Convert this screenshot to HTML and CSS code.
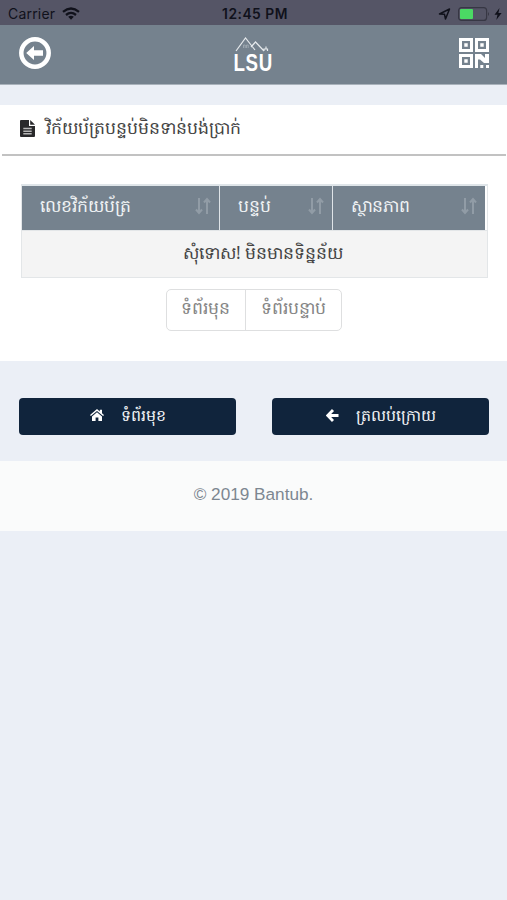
FILE: index.html
```html
<!DOCTYPE html>
<html lang="km">
<head>
<meta charset="utf-8">
<title>Bantub</title>
<link rel="stylesheet" href="styles.css">
</head>
<body>
<div class="status">
  <div class="carrier">Carrier
    <svg width="18" height="13" viewBox="0 0 18 13"><g fill="none" stroke="#10111b" stroke-width="2.3"><path d="M1 4.8Q9-1.8 17 4.8"/><path d="M4 8Q9 3.8 14 8"/></g><path d="M6.2 9.8Q9 7.6 11.8 9.8L9 12.7Z" fill="#10111b"/></svg>
  </div>
  <div class="time">12:45 PM</div>
  <div class="power">
    <svg width="13" height="12" viewBox="0 0 13 12"><path d="M1.5 6 11.5 1 7.5 11 6.5 6.3Z" fill="none" stroke="#10111b" stroke-width="1.5" stroke-linejoin="round"/></svg>
    <svg width="32" height="14" viewBox="0 0 32 14"><rect x=".6" y=".6" width="28" height="12.8" rx="3" fill="none" stroke="#373744" stroke-width="1.2"/><rect x="2" y="2" width="13" height="10" rx="1" fill="#4bd964"/><path d="M30 5Q32 7 30 9Z" fill="#373744"/></svg>
    <svg width="8" height="12" viewBox="0 0 8 12"><path d="M5.5 0 .5 6.8H3.5L2.3 12 7.6 4.9H4.4Z" fill="#10111b"/></svg>
  </div>
</div>
<header class="navbar">
  <svg width="32" height="32" viewBox="0 0 32 32"><circle cx="16" cy="16" r="13.7" fill="none" stroke="#fff" stroke-width="4.5"/><path d="M7.2 16 15 9V13.3H24V18.7H15V23Z" fill="#fff"/></svg>
  <svg class="logo" width="42" height="46" viewBox="0 0 42 46"><g fill="none" stroke="#e5e9ec" stroke-width="1.2"><path d="M3 21 12.5 8 22 20M18 17 22.5 12 31 21M31 21V19H34.5V21M33 19V16.5"/><path d="M10.5 18V15H12.2V18M13.5 18V15H15.2V18" stroke="#a5aeb6" stroke-width=".8"/></g><text class="logo-text" x="0.5 16 33" y="41" transform="scale(.78 1)">LSU</text></svg>
  <svg width="30" height="30" viewBox="0 0 30 30"><g fill="none" stroke="#fff" stroke-width="3"><path d="M1.5 1.5H12.5V12.5H1.5ZM17.5 1.5H28.5V12.5H17.5ZM1.5 17.5H12.5V28.5H1.5Z"/></g><g fill="#fff"><path d="M5.3 5.3h3.4v3.4H5.3ZM21.3 5.3h3.4v3.4h-3.4ZM5.3 21.3h3.4v3.4H5.3ZM16 16h6l4 4V16h4v9h-5l-4-3.5h-2V30h-3ZM21.3 27h3v3h-3ZM27 27h3v3h-3Z"/></g></svg>
</header>
<main class="panel">
  <h1 class="title">
    <svg width="15" height="17" viewBox="0 0 15 17"><path d="M0 1Q0 0 1 0H9V6H15V16Q15 17 14 17H1Q0 17 0 16Z" fill="#29292b"/><path d="M10.2 0 15 4.8H10.2Z" fill="#29292b"/><path d="M3.3 8.6H11.7M3.3 11.2H11.7M3.3 13.8H11.7" stroke="#b5b5b5" stroke-width="1.5"/></svg>
    <span>វិក័យប័ត្របន្ទប់មិនទាន់បង់ប្រាក់</span>
  </h1>
  <div class="table">
    <div class="thead">
      <div class="th"><span>លេខវិក័យប័ត្រ</span><svg width="16" height="18" viewBox="0 0 16 18"><path d="M4 1V15M1 12.5 4 16 7 12.5M12 17V3M9 5.5 12 2 15 5.5"/></svg></div>
      <div class="th"><span>បន្ទប់</span><svg width="16" height="18" viewBox="0 0 16 18"><path d="M4 1V15M1 12.5 4 16 7 12.5M12 17V3M9 5.5 12 2 15 5.5"/></svg></div>
      <div class="th"><span>ស្ថានភាព</span><svg width="16" height="18" viewBox="0 0 16 18"><path d="M4 1V15M1 12.5 4 16 7 12.5M12 17V3M9 5.5 12 2 15 5.5"/></svg></div>
    </div>
    <div class="empty">សុំទោស! មិនមានទិន្នន័យ</div>
  </div>
  <nav class="pager"><a>ទំព័រមុន</a><a>ទំព័របន្ទាប់</a></nav>
</main>
<div class="actions">
  <a class="btn"><svg width="14" height="12" viewBox="0 0 14 12"><path d="M7 0 9.8 2.4V.8H12V4.3L14 6 13.1 7 7 1.9.9 7 0 6Z"/><path d="M7 3.2 12 7.4V12H8.4V8.5H5.6V12H2V7.4Z"/></svg><span>ទំព័រមុខ</span></a>
  <a class="btn"><svg width="13" height="13" viewBox="0 0 13 13"><path d="M7 1 1.8 6.5 7 12M2 6.5H12.5" fill="none" stroke="#fff" stroke-width="2.8"/></svg><span>ត្រលប់ក្រោយ</span></a>
</div>
<footer class="footer">© 2019 Bantub.</footer>
</body>
</html>
```
FILE: styles.css
```css
* { box-sizing: border-box; }
body {
  margin: 0;
  min-height: 900px;
  background: #ebeff6;
  font: 17.3px/24px "Noto Sans", sans-serif;
  color: #444;
}
svg { display: block; flex: none; }
.status {
  display: grid;
  grid-template-columns: 1fr auto 1fr;
  align-items: center;
  height: 25px;
  padding: 2px 5px 0 8px;
  background: #555566;
  color: #10111b;
  font: 14px/20px Inter, sans-serif;
}
.carrier { display: flex; align-items: center; gap: 7px; letter-spacing: .2px; }
.time { font-weight: 600; letter-spacing: .5px; font-size: 13.8px; }
.power { display: flex; align-items: center; justify-content: flex-end; gap: 4px; }
.power svg:first-child { margin-right: 3px; }
.navbar {
  display: flex;
  justify-content: space-between;
  align-items: center;
  height: 60px;
  padding: 0 18px 4px 19px;
  background: #75828e;
  border-bottom: 1px solid #a9b2bb;
}
.logo { margin-right: 3px; }
.logo-text { font: 700 24px "Liberation Sans", sans-serif; fill: #fff; }
.panel { height: 256px; margin-top: 20px; padding-top: 0; background: #fff; }
.title {
  display: flex;
  align-items: center;
  gap: 11px;
  height: 51px;
  margin: 0 1px 0 2px;
  padding: 0 0 3px 18px;
  border-bottom: 2px solid #c2c2c2;
  font-size: inherit;
  font-weight: 400;
}
.table {
  margin: 28px 19px 0 21px;
  border: 1px solid #e3e6e8;
  border-top: 2px solid #dfe5e9;
}
.thead { display: grid; grid-template-columns: 197px 113px 1fr; height: 44px; padding-right: 2px; }
.th {
  display: flex;
  align-items: center;
  justify-content: space-between;
  padding: 0 8px 4px 18px;
  background: #75828e;
  color: #f0f3f5;
}
.th + .th { border-left: 1px solid #dfe4e8; }
.th svg { fill: none; stroke: #919ca6; stroke-width: 2; }
.empty {
  height: 47px;
  border-top: 1px solid #e3e6e8;
  background: #f4f4f4;
  line-height: 43px;
  text-align: center;
  padding-left: 17px;
}
.pager {
  display: flex;
  width: 176px;
  height: 42px;
  margin: 11px auto 0;
  border: 1px solid #dedfe0;
  border-radius: 5px;
  color: #858585;
  line-height: 36px;
}
.pager a { flex: 1 1 auto; text-align: center; }
.pager a + a { border-left: 1px solid #dedfe0; }
.actions {
  display: grid;
  grid-template-columns: 1fr 1fr;
  gap: 36px;
  height: 100px;
  padding: 37px 18px 26px 19px;
}
.btn {
  display: flex;
  align-items: center;
  justify-content: center;
  gap: 17px;
  padding-bottom: 3px;
  border-radius: 4px;
  background: #10243c;
  color: #f3f5f7;
  font-size: 15.8px;
  font-weight: 500;
}
.btn svg { fill: #fff; }
.footer {
  height: 70px;
  background: #fafbfb;
  color: #7d8791;
  font: 17.2px/66px "Liberation Sans", sans-serif;
  text-align: center;
}
```
